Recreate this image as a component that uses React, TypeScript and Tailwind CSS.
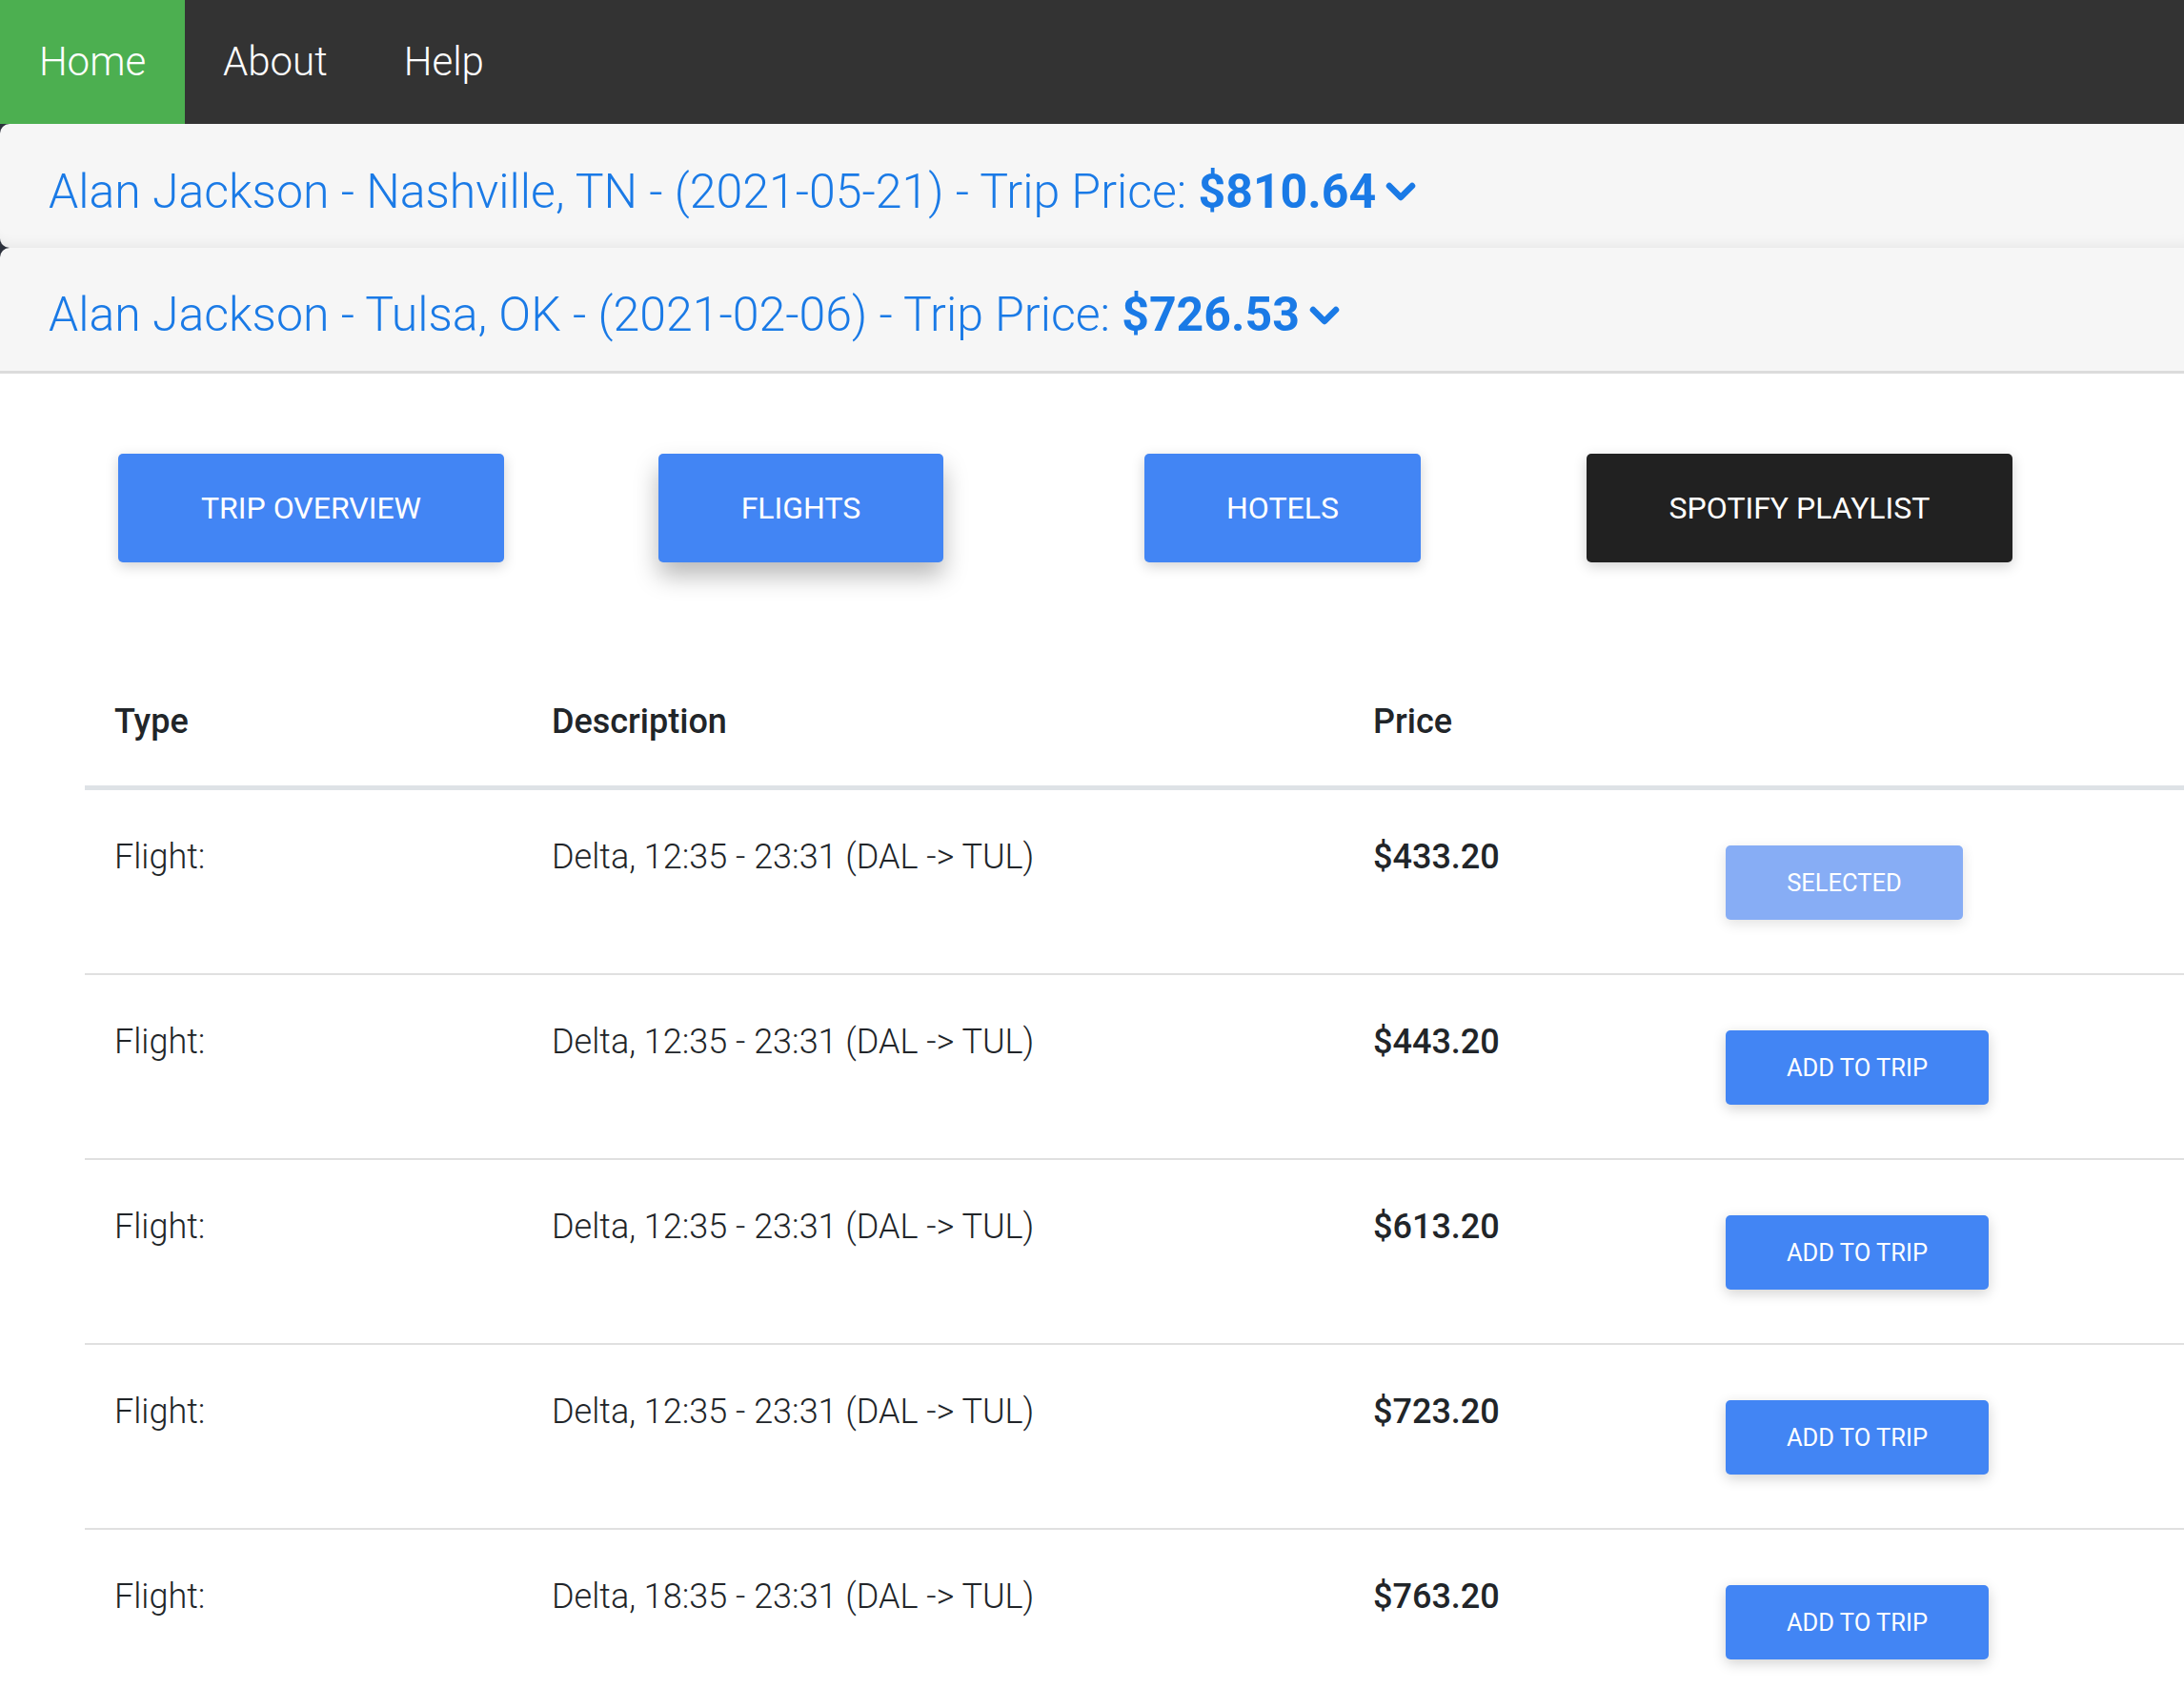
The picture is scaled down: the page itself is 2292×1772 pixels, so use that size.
import React from "react"

const trips = [
    { artist: "Alan Jackson", city: "Nashville, TN", date: "2021-05-21", price: "$810.64" },
    { artist: "Alan Jackson", city: "Tulsa, OK", date: "2021-02-06", price: "$726.53" },
]

const flights = [
    { desc: "Delta, 12:35 - 23:31 (DAL -> TUL)", price: "$433.20", selected: true },
    { desc: "Delta, 12:35 - 23:31 (DAL -> TUL)", price: "$443.20", selected: false },
    { desc: "Delta, 12:35 - 23:31 (DAL -> TUL)", price: "$613.20", selected: false },
    { desc: "Delta, 12:35 - 23:31 (DAL -> TUL)", price: "$723.20", selected: false },
    { desc: "Delta, 18:35 - 23:31 (DAL -> TUL)", price: "$763.20", selected: false },
]

function Chevron() {
    return (
        <svg width="32" height="24" viewBox="0 0 32 24" className="ml-[10px] mt-[2px]" aria-hidden>
            <polyline points="4,5 16,17 28,5" fill="none" stroke="#1a7ae6" strokeWidth="6.5" strokeLinecap="round" strokeLinejoin="round" />
        </svg>
    )
}

export default function App() {
    return (
        <div className="min-h-screen bg-white font-['Roboto',sans-serif] text-[#212529]">
            <nav className="flex h-[130px] bg-[#333333] text-[42px] font-light text-white">
                <a className="flex w-[194px] items-center justify-center bg-[#4CAF50] pb-[2px]">Home</a>
                <a className="flex items-center px-[40px] pb-[2px]">About</a>
                <a className="flex items-center px-[40px] pb-[2px]">Help</a>
            </nav>

            <div className="bg-[#2c313c]">
                {trips.map((t, i) => (
                    <div
                        key={t.city}
                        className={
                            i === 0
                                ? "flex h-[130px] items-center rounded-l-[10px] bg-[#f6f6f6] pl-[51px] pt-[12px] shadow-[inset_0_-14px_14px_-12px_rgba(0,0,0,0.07)]"
                                : "flex h-[132px] items-center rounded-tl-[10px] border-b-[3px] border-[#dcdcdc] bg-[#f6f6f6] pl-[51px] pt-[12px]"
                        }
                    >
                        <span className="text-[50px] font-light text-[#1a7ae6]">
                            {t.artist} - {t.city} - ({t.date}) - Trip Price:{" "}
                            <span className="font-bold">{t.price}</span>
                        </span>
                        <Chevron />
                    </div>
                ))}
            </div>

            <div className="flex items-center pt-[84px] text-[32px] text-white">
                <button className="ml-[124px] h-[114px] w-[405px] rounded-[5px] bg-[#4285f4] shadow-[0_4px_14px_rgba(0,0,0,0.18)]">
                    TRIP OVERVIEW
                </button>
                <button className="ml-[162px] h-[114px] w-[299px] rounded-[5px] bg-[#4285f4] shadow-[0_14px_26px_rgba(0,0,0,0.28)]">
                    FLIGHTS
                </button>
                <button className="ml-[211px] h-[114px] w-[290px] rounded-[5px] bg-[#4285f4] shadow-[0_4px_14px_rgba(0,0,0,0.18)]">
                    HOTELS
                </button>
                <button className="ml-[174px] h-[114px] w-[447px] rounded-[5px] bg-[#212121] shadow-[0_4px_14px_rgba(0,0,0,0.18)]">
                    SPOTIFY PLAYLIST
                </button>
            </div>

            <div className="ml-[89px] mt-[100px] text-[36px]">
                <div className="grid h-[139px] grid-cols-[459px_862px_370px_1fr] items-center border-b-[5px] border-[#dee2e6] font-medium">
                    <div className="pl-[31px]">Type</div>
                    <div className="pl-[31px]">Description</div>
                    <div className="pl-[31px]">Price</div>
                    <div />
                </div>
                {flights.map((f, i) => (
                    <div
                        key={i}
                        className="grid h-[194px] grid-cols-[459px_862px_370px_1fr] items-start border-b-2 border-[#e0e0e0] leading-[52px]"
                    >
                        <div className="pl-[31px] pt-[44px] font-light">Flight:</div>
                        <div className="pl-[31px] pt-[44px] font-light">{f.desc}</div>
                        <div className="pl-[31px] pt-[44px] font-medium">{f.price}</div>
                        <div className="pl-[31px] pt-[58px]">
                            {f.selected ? (
                                <button className="h-[78px] w-[249px] rounded-[5px] bg-[#87adf5] text-[25.5px] text-white shadow-[0_4px_14px_rgba(0,0,0,0.12)]">
                                    SELECTED
                                </button>
                            ) : (
                                <button className="h-[78px] w-[276px] rounded-[5px] bg-[#4285f4] text-[25.5px] text-white shadow-[0_4px_14px_rgba(0,0,0,0.18)]">
                                    ADD TO TRIP
                                </button>
                            )}
                        </div>
                    </div>
                ))}
            </div>
        </div>
    )
}
